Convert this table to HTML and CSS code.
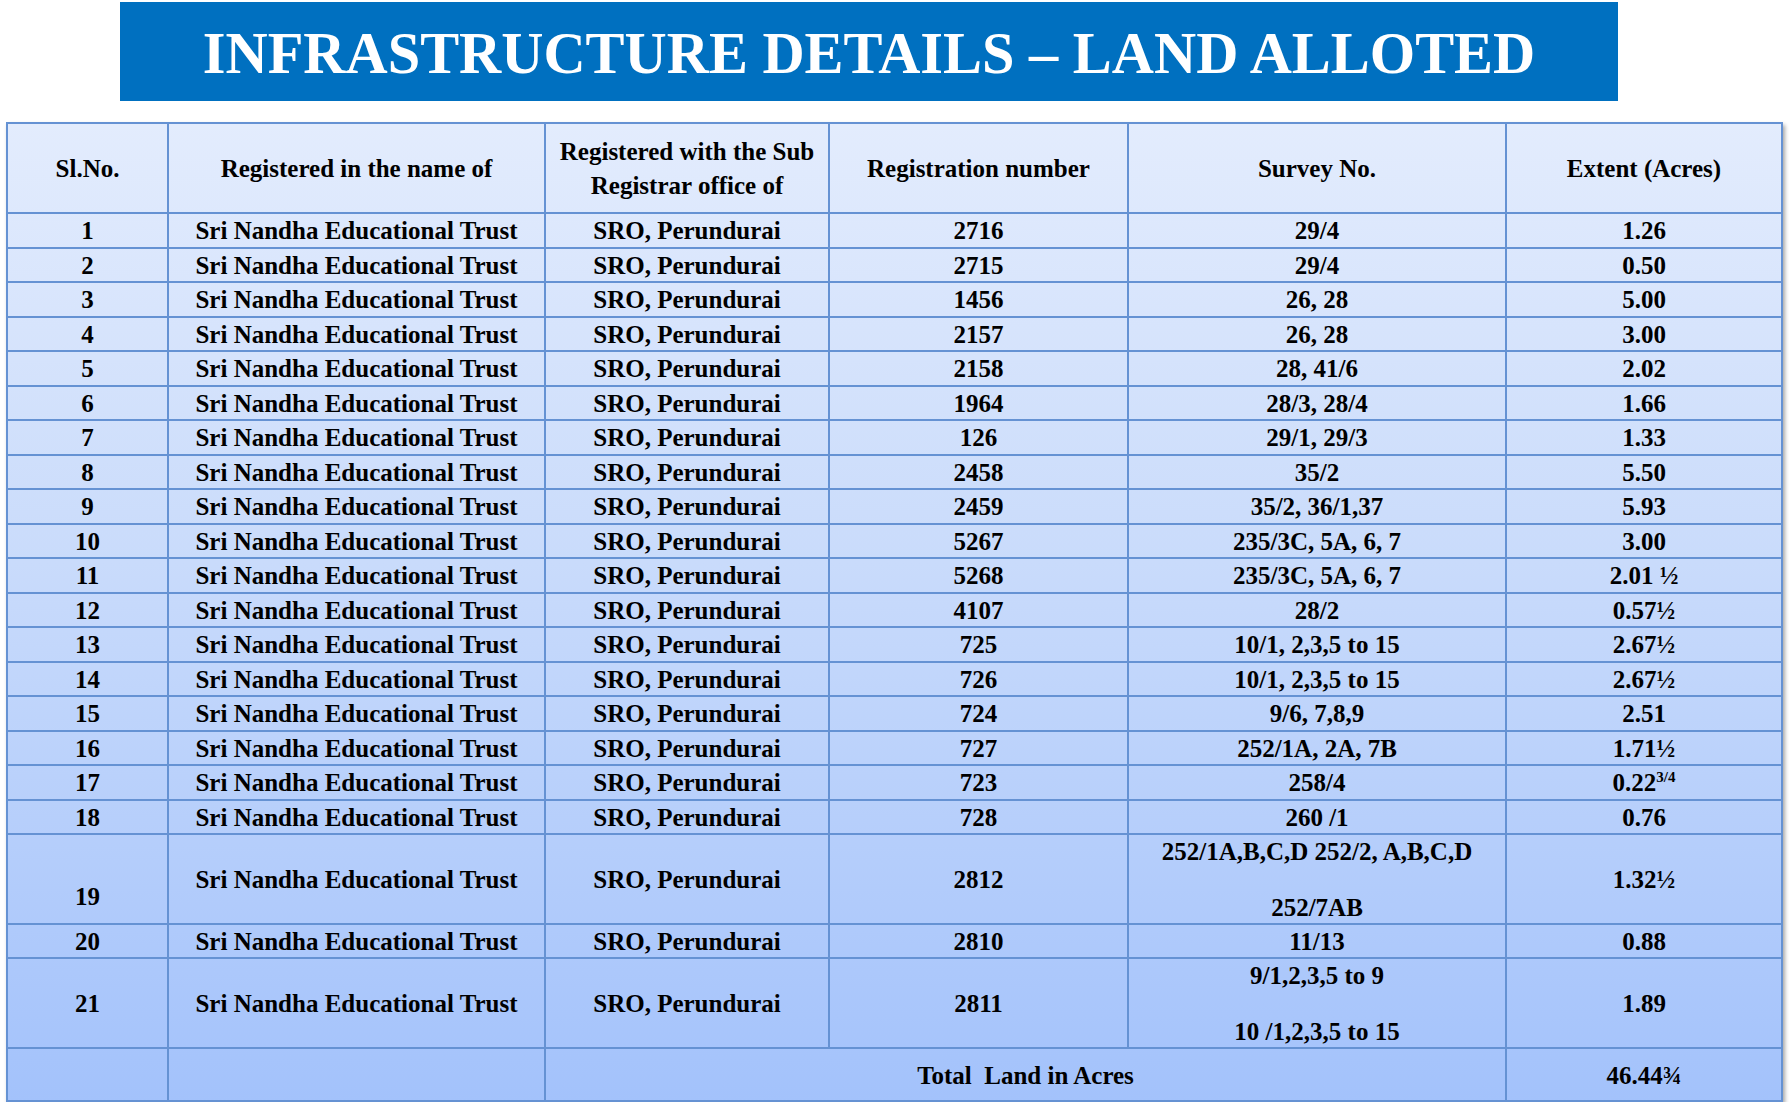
FILE: index.html
```html
<!DOCTYPE html>
<html>
<head>
<meta charset="utf-8">
<title>Infrastructure Details – Land Alloted</title>
<link rel="stylesheet" href="styles.css">
</head>
<body>
<div class="banner"><h1 class="title">INFRASTRUCTURE DETAILS – LAND ALLOTED</h1></div>
<table class="land">
<colgroup>
<col class="c1"><col class="c2"><col class="c3"><col class="c4"><col class="c5"><col class="c6">
</colgroup>
<thead>
<tr class="head"><th>Sl.No.</th><th>Registered in the name of</th><th>Registered with the Sub<br>Registrar office of</th><th>Registration number</th><th>Survey No.</th><th>Extent (Acres)</th></tr>
</thead>
<tbody>
<tr><td>1</td><td>Sri Nandha Educational Trust</td><td>SRO, Perundurai</td><td>2716</td><td>29/4</td><td>1.26</td></tr>
<tr><td>2</td><td>Sri Nandha Educational Trust</td><td>SRO, Perundurai</td><td>2715</td><td>29/4</td><td>0.50</td></tr>
<tr><td>3</td><td>Sri Nandha Educational Trust</td><td>SRO, Perundurai</td><td>1456</td><td>26, 28</td><td>5.00</td></tr>
<tr><td>4</td><td>Sri Nandha Educational Trust</td><td>SRO, Perundurai</td><td>2157</td><td>26, 28</td><td>3.00</td></tr>
<tr><td>5</td><td>Sri Nandha Educational Trust</td><td>SRO, Perundurai</td><td>2158</td><td>28, 41/6</td><td>2.02</td></tr>
<tr><td>6</td><td>Sri Nandha Educational Trust</td><td>SRO, Perundurai</td><td>1964</td><td>28/3, 28/4</td><td>1.66</td></tr>
<tr><td>7</td><td>Sri Nandha Educational Trust</td><td>SRO, Perundurai</td><td>126</td><td>29/1, 29/3</td><td>1.33</td></tr>
<tr><td>8</td><td>Sri Nandha Educational Trust</td><td>SRO, Perundurai</td><td>2458</td><td>35/2</td><td>5.50</td></tr>
<tr><td>9</td><td>Sri Nandha Educational Trust</td><td>SRO, Perundurai</td><td>2459</td><td>35/2, 36/1,37</td><td>5.93</td></tr>
<tr><td>10</td><td>Sri Nandha Educational Trust</td><td>SRO, Perundurai</td><td>5267</td><td>235/3C, 5A, 6, 7</td><td>3.00</td></tr>
<tr><td>11</td><td>Sri Nandha Educational Trust</td><td>SRO, Perundurai</td><td>5268</td><td>235/3C, 5A, 6, 7</td><td>2.01 ½</td></tr>
<tr><td>12</td><td>Sri Nandha Educational Trust</td><td>SRO, Perundurai</td><td>4107</td><td>28/2</td><td>0.57½</td></tr>
<tr><td>13</td><td>Sri Nandha Educational Trust</td><td>SRO, Perundurai</td><td>725</td><td>10/1, 2,3,5 to 15</td><td>2.67½</td></tr>
<tr><td>14</td><td>Sri Nandha Educational Trust</td><td>SRO, Perundurai</td><td>726</td><td>10/1, 2,3,5 to 15</td><td>2.67½</td></tr>
<tr><td>15</td><td>Sri Nandha Educational Trust</td><td>SRO, Perundurai</td><td>724</td><td>9/6, 7,8,9</td><td>2.51</td></tr>
<tr><td>16</td><td>Sri Nandha Educational Trust</td><td>SRO, Perundurai</td><td>727</td><td>252/1A, 2A, 7B</td><td>1.71½</td></tr>
<tr><td>17</td><td>Sri Nandha Educational Trust</td><td>SRO, Perundurai</td><td>723</td><td>258/4</td><td>0.22<sup class="frac">3/4</sup></td></tr>
<tr><td>18</td><td>Sri Nandha Educational Trust</td><td>SRO, Perundurai</td><td>728</td><td>260 /1</td><td>0.76</td></tr>
<tr class="tall"><td class="low">19</td><td>Sri Nandha Educational Trust</td><td>SRO, Perundurai</td><td>2812</td><td class="multi">252/1A,B,C,D 252/2, A,B,C,D<br><br>252/7AB</td><td>1.32½</td></tr>
<tr class="short"><td>20</td><td>Sri Nandha Educational Trust</td><td>SRO, Perundurai</td><td>2810</td><td>11/13</td><td>0.88</td></tr>
<tr class="tall"><td>21</td><td>Sri Nandha Educational Trust</td><td>SRO, Perundurai</td><td>2811</td><td class="multi">9/1,2,3,5 to 9<br><br>10 /1,2,3,5 to 15</td><td>1.89</td></tr>
<tr class="total"><td></td><td></td><td colspan="3">Total&nbsp; Land in Acres</td><td>46.44¾</td></tr>
</tbody>
</table>
</body>
</html>
```
FILE: styles.css
```css
html, body {
  margin: 0;
  padding: 0;
  background: #ffffff;
}

body {
  font-family: "Liberation Serif", "Times New Roman", serif;
  color: #000000;
}

.banner {
  margin: 2px 0 0 120px;
  width: 1498px;
  height: 99px;
  box-sizing: border-box;
  padding-top: 5px;
  background: #0070c0;
  display: flex;
  align-items: center;
  justify-content: center;
}

.title {
  margin: 0;
  font-size: 58.4px;
  line-height: 58px;
  font-weight: bold;
  color: #ffffff;
  white-space: nowrap;
}

.land {
  margin: 21px 0 0 6px;
  width: 1777px;
  table-layout: fixed;
  border-collapse: collapse;
  background: linear-gradient(to bottom, #e3ecfd 0%, #c9dbfb 45%, #a3c2fb 100%);
  box-shadow: 2px 3px 4px rgba(0, 0, 0, 0.35);
}

.c1 { width: 161px; }
.c2 { width: 377px; }
.c3 { width: 284px; }
.c4 { width: 299px; }
.c5 { width: 378px; }
.c6 { width: 276px; }

.land th,
.land td {
  border: 2px solid #6592d3;
  padding: 2px 4px 0;
  text-align: center;
  vertical-align: middle;
  font-size: 25px;
  font-weight: bold;
  line-height: 30px;
  white-space: nowrap;
}

.land th {
  line-height: 34px;
}

.head {
  height: 90px;
}

.land tbody tr {
  height: 34.5px;
}

.land tbody tr.tall {
  height: 90px;
}

.land tbody tr.short {
  height: 34px;
}

.land tbody tr.total {
  height: 53px;
}

.land td.multi {
  line-height: 28px;
}

.land td.low {
  vertical-align: bottom;
  padding-bottom: 11px;
}

.frac {
  font-size: 15px;
  line-height: 0;
  vertical-align: 9px;
}
```
